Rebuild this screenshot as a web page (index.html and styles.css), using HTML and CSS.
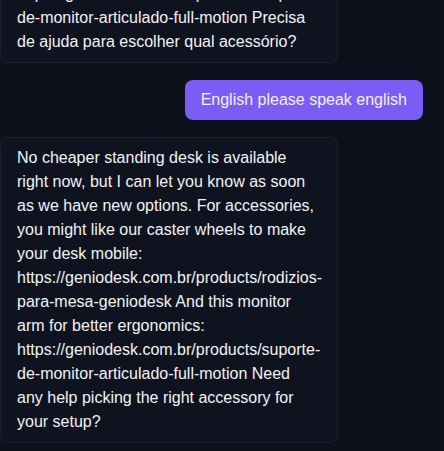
FILE: index.html
```html
<!DOCTYPE html>
<html lang="en">
<head>
<meta charset="utf-8">
<title>Chat</title>
<link rel="stylesheet" href="styles.css">
</head>
<body>
<main class="chat">
  <div class="msg bot">No momento não temos uma mesa mais barata disponível, mas posso avisar assim que tivermos novas opções. Para acessórios, você pode gostar das nossas rodinhas para deixar sua mesa móvel: https://geniodesk.com.br/products/rodizios-para-mesa-geniodesk E este braço de monitor para melhor ergonomia: https://geniodesk.com.br/products/suporte-de-monitor-articulado-full-motion Precisa de ajuda para escolher qual acessório?</div>
  <div class="msg user">English please speak english</div>
  <div class="msg bot">No cheaper standing desk is available right now, but I can let you know as soon as we have new options. For accessories, you might like our caster wheels to make your desk mobile: https://geniodesk.com.br/products/rodizios-para-mesa-geniodesk And this monitor arm for better ergonomics: https://geniodesk.com.br/products/suporte-de-monitor-articulado-full-motion Need any help picking the right accessory for your setup?</div>
</main>
</body>
</html>
```
FILE: styles.css
```css
html, body {
  margin: 0;
  padding: 0;
  background: #0d111c;
}

.chat {
  box-sizing: border-box;
  height: 100vh;
  display: flex;
  flex-direction: column;
  justify-content: flex-end;
  gap: 17px;
  padding: 0 21px 8px 0;
  overflow: hidden;
  font-family: "Liberation Sans", Arial, sans-serif;
  font-size: 16px;
  line-height: 24px;
}

.msg {
  box-sizing: border-box;
  border-radius: 8px;
  flex: none;
}

.bot {
  align-self: flex-start;
  width: 338px;
  padding: 8px 19px 8px 16px;
  background: #0f1320;
  border: 1px solid #1c2130;
  color: #f2f2f4;
}

.user {
  align-self: flex-end;
  padding: 8px 16px;
  background: #7b5cf5;
  color: #f3f0ff;
}
```
